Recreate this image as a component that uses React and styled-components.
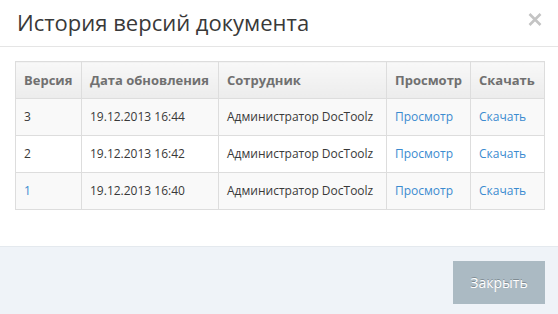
import styled, { createGlobalStyle } from "styled-components";

const GlobalStyle = createGlobalStyle`
  html, body {
    margin: 0;
    padding: 0;
    background: #fff;
  }
  body {
    font-family: "Open Sans", "DejaVu Sans", sans-serif;
    font-size: 13px;
    color: #393939;
  }
`;

const versions = [
  { id: 3, date: "19.12.2013 16:44", user: "Администратор DocToolz" },
  { id: 2, date: "19.12.2013 16:42", user: "Администратор DocToolz" },
  { id: 1, date: "19.12.2013 16:40", user: "Администратор DocToolz", current: true },
];

function App() {
  return (
    <Modal>
      <GlobalStyle />
      <Header>
        <Title>История версий документа</Title>
        <CloseButton aria-label="Закрыть">
          <svg width="14" height="13" viewBox="0 0 14 13">
            <path d="M1.5 1 L12.5 12 M12.5 1 L1.5 12" stroke="#c4c4c4" strokeWidth="2.6" />
          </svg>
        </CloseButton>
      </Header>

      <Body>
        <Table>
          <colgroup>
            <col style={{ width: 66 }} />
            <col style={{ width: 137 }} />
            <col style={{ width: 168 }} />
            <col style={{ width: 84 }} />
            <col />
          </colgroup>
          <thead>
            <tr>
              <Th>Версия</Th>
              <Th>Дата обновления</Th>
              <Th>Сотрудник</Th>
              <Th>Просмотр</Th>
              <Th>Скачать</Th>
            </tr>
          </thead>
          <tbody>
            {versions.map((v) => (
              <Row key={v.id}>
                <Td>{v.current ? <Link href="#">{v.id}</Link> : v.id}</Td>
                <Td>{v.date}</Td>
                <Td>{v.user}</Td>
                <Td>
                  <Link href="#">Просмотр</Link>
                </Td>
                <Td>
                  <Link href="#">Скачать</Link>
                </Td>
              </Row>
            ))}
          </tbody>
        </Table>
      </Body>

      <Footer>
        <Button>Закрыть</Button>
      </Footer>
    </Modal>
  );
}

export default App;

const Modal = styled.div`
  width: 558px;
  height: 314px;
  display: flex;
  flex-direction: column;
  background: #fff;
  overflow: hidden;
`;

const Header = styled.div`
  height: 47px;
  box-sizing: border-box;
  display: flex;
  align-items: center;
  justify-content: space-between;
  padding: 0 16px 0 17px;
  border-bottom: 1px solid #e5e5e5;
`;

const Title = styled.h4`
  margin: 0;
  font-size: 22px;
  font-weight: 400;
  line-height: 28px;
  color: #393939;
  margin-top: -2px;
`;

const CloseButton = styled.button`
  border: none;
  background: transparent;
  padding: 0;
  display: flex;
  margin-top: -7px;
  cursor: pointer;
`;

const Body = styled.div`
  padding: 14px 13px 0 15px;
  height: 199px;
  box-sizing: border-box;
`;

const Table = styled.table`
  width: 530px;
  table-layout: fixed;
  border-collapse: collapse;
  border: 1px solid #ddd;
`;

const Th = styled.th`
  text-align: left;
  padding: 8px;
  line-height: 20px;
  font-size: 13px;
  font-weight: 700;
  color: #707070;
  border: 1px solid #ddd;
  background: linear-gradient(to bottom, #f8f8f8 0%, #ececec 100%);
  white-space: nowrap;
`;

const Row = styled.tr`
  &:nth-child(odd) {
    background: #f9f9f9;
  }
`;

const Td = styled.td`
  padding: 8px;
  line-height: 20px;
  font-size: 12px;
  border: 1px solid #ddd;
  white-space: nowrap;
  color: #393939;
`;

const Link = styled.a`
  color: #3b8bd0;
  text-decoration: none;
`;

const Footer = styled.div`
  flex: 1;
  display: flex;
  justify-content: flex-end;
  align-items: flex-start;
  padding: 14px 13px 0 0;
  background: #eff3f8;
  border-top: 1px solid #e4e9ee;
`;

const Button = styled.button`
  width: 92px;
  height: 43px;
  border: none;
  background: #abbac3;
  color: #fff;
  font-family: "Open Sans", "DejaVu Sans", sans-serif;
  font-size: 14px;
  text-shadow: 0 -1px 0 rgba(0, 0, 0, 0.25);
  cursor: pointer;
`;
